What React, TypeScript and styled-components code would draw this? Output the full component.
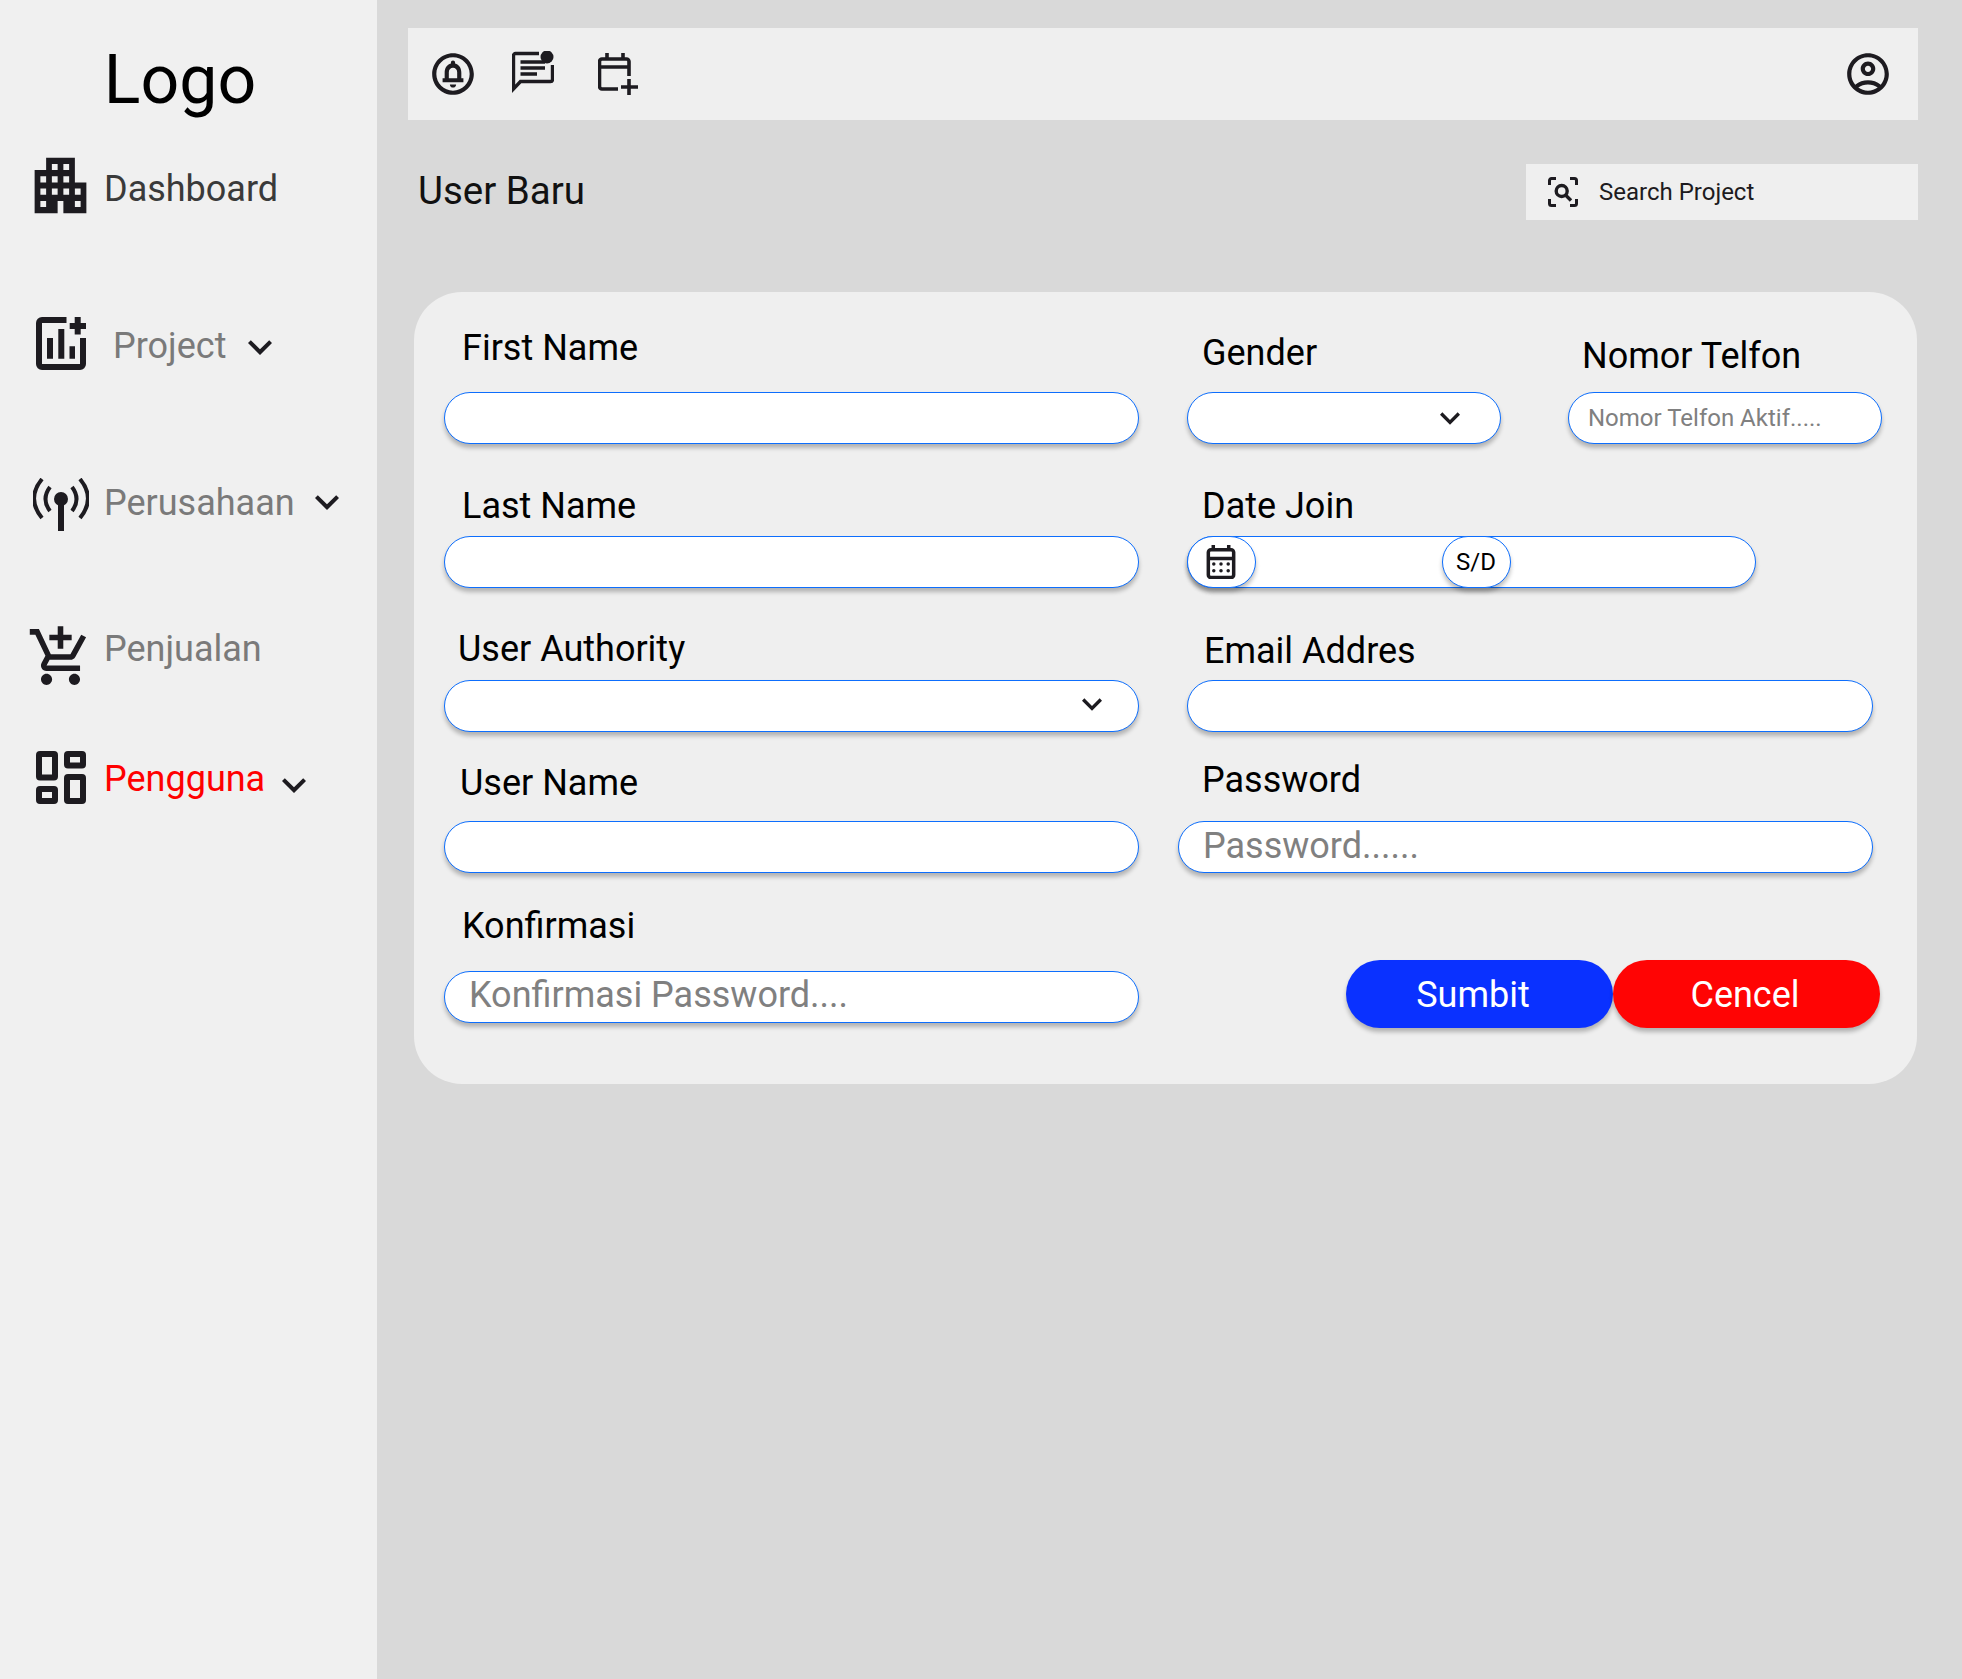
import React from 'react';
import styled, { createGlobalStyle } from 'styled-components';
import {
  MdApartment,
  MdOutlineAddShoppingCart,
  MdExpandMore,
  MdOutlineCircleNotifications,
  MdOutlineAccountCircle,
} from 'react-icons/md';

const GlobalStyle = createGlobalStyle`
  html, body {
    margin: 0;
    padding: 0;
    background: #d9d9d9;
  }
  * {
    box-sizing: border-box;
  }
`;

const Page = styled.div`
  display: flex;
  min-height: 1679px;
  font-family: Roboto, "Liberation Sans", sans-serif;
  background: #d9d9d9;
  overflow: hidden;
`;

const Sidebar = styled.aside`
  width: 377px;
  flex-shrink: 0;
  background: #f0f0f0;
`;

const Logo = styled.div`
  height: 156px;
  padding-top: 40px;
  padding-right: 17px;
  text-align: center;
  font-size: 68px;
  line-height: 80px;
  color: #000;
`;

const NavItem = styled.div<{ $top: number }>`
  display: flex;
  align-items: center;
  height: 64px;
  margin-top: ${(p) => p.$top}px;
`;

const NavIcon = styled.span<{ $dy?: number }>`
  display: flex;
  align-items: center;
  justify-content: center;
  width: 67px;
  height: 67px;
  margin-left: 27px;
  margin-right: 10px;
  margin-top: ${(p) => p.$dy ?? 0}px;
  flex-shrink: 0;
  color: #1d1b20;
`;

const BuildingIcon = styled(MdApartment)`
  flex-shrink: 0;
  transform: scaleY(1.07);
`;

const NavLabel = styled.span<{ $color: string; $indent?: number; $dy?: number }>`
  font-size: 36px;
  color: ${(p) => p.$color};
  margin-left: ${(p) => p.$indent ?? 0}px;
  margin-top: ${(p) => p.$dy ?? 2}px;
  white-space: nowrap;
`;

const NavChevron = styled(MdExpandMore)<{ $left: number; $dy?: number }>`
  font-size: 48px;
  color: #1d1b20;
  margin-left: ${(p) => p.$left}px;
  margin-top: ${(p) => p.$dy ?? 0}px;
  flex-shrink: 0;
`;

const Main = styled.main`
  flex: 1;
  padding: 28px 44px 0 31px;
`;

const TopBar = styled.header`
  display: flex;
  align-items: center;
  height: 92px;
  padding: 0 25px 0 24px;
  background: #efefef;
  color: #1d1b20;
`;

const TopIcons = styled.div`
  display: flex;
  align-items: center;
  flex: 1;
`;

const BellIcon = styled(MdOutlineCircleNotifications)`
  font-size: 50px;
  margin-left: -4px;
`;

const ChatSvg = styled.svg`
  width: 42px;
  height: 44px;
  margin-left: 34px;
  margin-top: -3px;
`;

const CalendarSvg = styled.svg`
  width: 40px;
  height: 42px;
  margin-left: 44px;
`;

const AccountIcon = styled(MdOutlineAccountCircle)`
  font-size: 50px;
`;

const HeaderRow = styled.div`
  display: flex;
  align-items: center;
  justify-content: space-between;
  height: 56px;
  margin-top: 44px;
`;

const Title = styled.h1`
  margin: 0 0 4px 10px;
  font-size: 38.500px;
  font-weight: 400;
  color: #111;
`;

const SearchBox = styled.div`
  display: flex;
  align-items: center;
  width: 392px;
  height: 56px;
  padding-left: 22px;
  background: #efefef;
  font-size: 24px;
  color: #1d1b20;
`;

const SearchSvg = styled.svg`
  width: 30px;
  height: 30px;
  margin-right: 21px;
`;

const Card = styled.section`
  margin: 72px 1px 0 6px;
  padding: 0 0 61px 30px;
  background: #efefef;
  border-radius: 48px;
`;

const Row = styled.div<{ $height: number; $gap: number }>`
  display: flex;
  align-items: flex-end;
  height: ${(p) => p.$height}px;
  gap: ${(p) => p.$gap}px;
`;

const Field = styled.div<{ $width: number; $left?: number }>`
  display: flex;
  flex-direction: column;
  width: ${(p) => p.$width}px;
  margin-left: ${(p) => p.$left ?? 0}px;
  flex-shrink: 0;
`;

const Label = styled.label<{ $left: number; $bottom: number }>`
  display: block;
  margin: 0 0 ${(p) => p.$bottom}px ${(p) => p.$left}px;
  font-size: 36px;
  line-height: 42px;
  color: #000;
  white-space: nowrap;
`;

const Input = styled.input<{ $size?: number; $pad?: number; $raise?: number }>`
  display: block;
  width: 100%;
  height: 52px;
  padding: 0 ${(p) => p.$pad ?? 24}px ${(p) => p.$raise ?? 0}px;
  border: 1.5px solid #0d6efd;
  border-radius: 26px;
  background: #fff;
  box-shadow: 0 4px 4px rgba(0, 0, 0, 0.25);
  font-family: inherit;
  font-size: ${(p) => p.$size ?? 36}px;
  outline: none;

  &::placeholder {
    color: #808080;
    opacity: 1;
  }
`;

const SelectBox = styled.div<{ $pad: number; $raise?: number }>`
  display: flex;
  align-items: center;
  justify-content: flex-end;
  height: 52px;
  padding-right: ${(p) => p.$pad}px;
  padding-bottom: ${(p) => p.$raise ?? 0}px;
  border: 1.5px solid #0d6efd;
  border-radius: 26px;
  background: #fff;
  box-shadow: 0 4px 4px rgba(0, 0, 0, 0.25);
  color: #1d1b20;
  font-size: 40px;
`;

const DateBox = styled.div`
  display: flex;
  align-items: stretch;
  height: 52px;
  border: 1.5px solid #0d6efd;
  border-radius: 26px;
  background: #fff;
  box-shadow: 0 4px 4px rgba(0, 0, 0, 0.25);
`;

const DatePill = styled.div<{ $left?: number }>`
  display: flex;
  align-items: center;
  justify-content: center;
  width: 69px;
  height: 52px;
  margin: -1.5px 0 -1.5px ${(p) => p.$left ?? -1.5}px;
  border: 1.5px solid #0d6efd;
  border-radius: 26px;
  background: #fff;
  box-shadow: 0 4px 4px rgba(0, 0, 0, 0.25);
  font-size: 24px;
  color: #000;
  flex-shrink: 0;
`;

const CalendarSmall = styled.svg`
  width: 30px;
  height: 34px;
  color: #1d1b20;
`;

const Actions = styled.div`
  display: flex;
  margin-left: 159px;
  margin-bottom: -5px;
`;

const ActionButton = styled.button<{ $bg: string; $right: number }>`
  width: 267px;
  height: 68px;
  padding: 2px ${(p) => p.$right}px 0 0;
  border: none;
  border-radius: 34px;
  background: ${(p) => p.$bg};
  box-shadow: 0 4px 4px rgba(0, 0, 0, 0.25);
  color: #fff;
  font-family: inherit;
  font-size: 36px;
`;

const App: React.FC = () => {
  return (
    <Page>
      <GlobalStyle />
      <Sidebar>
        <Logo>Logo</Logo>
        <NavItem $top={0}>
          <NavIcon $dy={-6}>
            <BuildingIcon size={69} />
          </NavIcon>
          <NavLabel $color="#3a3a3a">Dashboard</NavLabel>
        </NavItem>
        <NavItem $top={93}>
          <NavIcon $dy={-3}>
            <svg width="50" height="53" viewBox="0 0 50 53" fill="currentColor">
              <path d="M30.500 0H6a6 6 0 0 0-6 6V47a6 6 0 0 0 6 6H44a6 6 0 0 0 6-6V21H44V47H6V6H30.500Z" />
              <path d="M11 21H17V41.700H11ZM22.300 12H28.300V41.700H22.300ZM33.500 29.300H39V41.700H33.500Z" />
              <path d="M38.700 0H44.700V6H50V12H44.700V17.600H38.700V12H33.700V6H38.700Z" />
            </svg>
          </NavIcon>
          <NavLabel $color="#7a7a7a" $indent={9}>Project</NavLabel>
          <NavChevron $left={10} $dy={4} />
        </NavItem>
        <NavItem $top={93}>
          <NavIcon $dy={4}>
            <svg width="56" height="53" viewBox="0 0 56 53" fill="none" stroke="currentColor">
              <circle cx="28" cy="21" r="7" fill="currentColor" stroke="none" />
              <path d="M28 21V53" strokeWidth="6" />
              <path d="M17 9Q8 21 17 33M39 9Q48 21 39 33" strokeWidth="4" />
              <path d="M9 1Q-7 20.500 9 40M47 1Q63 20.500 47 40" strokeWidth="4" />
            </svg>
          </NavIcon>
          <NavLabel $color="#7a7a7a">Perusahaan</NavLabel>
          <NavChevron $left={8} />
        </NavItem>
        <NavItem $top={82}>
          <NavIcon $dy={18}>
            <MdOutlineAddShoppingCart size={70} />
          </NavIcon>
          <NavLabel $color="#7a7a7a">Penjualan</NavLabel>
        </NavItem>
        <NavItem $top={66}>
          <NavIcon $dy={-2}>
            <svg width="50" height="53" viewBox="0 0 50 53" fill="none" stroke="currentColor" strokeWidth="6">
              <rect x="3" y="3" width="16" height="23.500" rx="1" />
              <rect x="31" y="3" width="16" height="11.500" rx="1" />
              <rect x="3" y="38" width="16" height="12" rx="1" />
              <rect x="31" y="26" width="16" height="24" rx="1" />
            </svg>
          </NavIcon>
          <NavLabel $color="#ff0000">Pengguna</NavLabel>
          <NavChevron $left={5} $dy={14} />
        </NavItem>
      </Sidebar>

      <Main>
        <TopBar>
          <TopIcons>
            <BellIcon />
            <ChatSvg viewBox="0 0 42 44" fill="none" stroke="currentColor" strokeWidth="3.400">
              <path d="M27 2.500H3.500a2 2 0 0 0-2 2V38l7-7.500H38.500a2 2 0 0 0 2-2V14" />
              <path d="M8.500 11H33M8.500 17H33M8.500 23H25" />
              <circle cx="35" cy="6" r="6.500" fill="currentColor" stroke="none" />
            </ChatSvg>
            <CalendarSvg viewBox="0 0 40 42" fill="none" stroke="currentColor" strokeWidth="3.600">
              <path d="M20 36H4a2.500 2.500 0 0 1-2.500-2.500V8.500A2.500 2.500 0 0 1 4 6h24.500a2.500 2.500 0 0 1 2.500 2.500V23" />
              <path d="M1.500 14H31M9 0v6M25 0v6" />
              <path d="M23 34H40M31 26V42" />
            </CalendarSvg>
          </TopIcons>
          <AccountIcon />
        </TopBar>

        <HeaderRow>
          <Title>User Baru</Title>
          <SearchBox>
            <SearchSvg viewBox="0 0 30 30" fill="none" stroke="currentColor" strokeWidth="3">
              <path d="M1.500 8V3.500a2 2 0 0 1 2-2H8M22 1.500h4.500a2 2 0 0 1 2 2V8M1.500 22v4.500a2 2 0 0 0 2 2H8M22 28.500h4.500a2 2 0 0 0 2-2V22" />
              <circle cx="13.700" cy="14" r="5.500" strokeWidth="3.400" />
              <path d="M18 18.500L23 23.500" strokeWidth="3.400" />
            </SearchSvg>
            Search Project
          </SearchBox>
        </HeaderRow>

        <Card>
          <Row $height={152} $gap={48}>
            <Field $width={695}>
              <Label $left={18} $bottom={23}>First Name</Label>
              <Input />
            </Field>
            <Field $width={314}>
              <Label $left={15} $bottom={18}>Gender</Label>
              <SelectBox $pad={30}>
                <MdExpandMore />
              </SelectBox>
            </Field>
            <Field $width={314} $left={19}>
              <Label $left={14} $bottom={15}>Nomor Telfon</Label>
              <Input $size={24} $pad={19} placeholder="Nomor Telfon Aktif....." />
            </Field>
          </Row>

          <Row $height={144} $gap={48}>
            <Field $width={695}>
              <Label $left={18} $bottom={9}>Last Name</Label>
              <Input />
            </Field>
            <Field $width={569}>
              <Label $left={15} $bottom={9}>Date Join</Label>
              <DateBox>
                <DatePill>
                  <CalendarSmall viewBox="0 0 28 33" fill="none" stroke="currentColor" strokeWidth="3.400">
                    <rect x="1.700" y="4.500" width="24.600" height="27" rx="2.500" />
                    <path d="M1.700 13H26.300M6.500 0V4M21.500 0V4" />
                    <g fill="currentColor" stroke="none">
                      <circle cx="7" cy="18.500" r="1.700" />
                      <circle cx="14" cy="18.500" r="1.700" />
                      <circle cx="21" cy="18.500" r="1.700" />
                      <circle cx="7" cy="25" r="1.700" />
                      <circle cx="14" cy="25" r="1.700" />
                      <circle cx="21" cy="25" r="1.700" />
                    </g>
                  </CalendarSmall>
                </DatePill>
                <DatePill $left={186}>S/D</DatePill>
              </DateBox>
            </Field>
          </Row>

          <Row $height={144} $gap={48}>
            <Field $width={695}>
              <Label $left={14} $bottom={10}>User Authority</Label>
              <SelectBox $pad={26} $raise={4}>
                <MdExpandMore />
              </SelectBox>
            </Field>
            <Field $width={686}>
              <Label $left={17} $bottom={8}>Email Addres</Label>
              <Input />
            </Field>
          </Row>

          <Row $height={141} $gap={39}>
            <Field $width={695}>
              <Label $left={16} $bottom={17}>User Name</Label>
              <Input />
            </Field>
            <Field $width={695}>
              <Label $left={24} $bottom={20}>Password</Label>
              <Input $raise={2} placeholder="Password......" />
            </Field>
          </Row>

          <Row $height={150} $gap={48}>
            <Field $width={695}>
              <Label $left={18} $bottom={24}>Konfirmasi</Label>
              <Input $raise={4} placeholder="Konfirmasi Password...." />
            </Field>
            <Actions>
              <ActionButton $bg="#0a31ff" $right={13}>Sumbit</ActionButton>
              <ActionButton $bg="#ff0404" $right={3}>Cencel</ActionButton>
            </Actions>
          </Row>
        </Card>
      </Main>
    </Page>
  );
};

export default App;
